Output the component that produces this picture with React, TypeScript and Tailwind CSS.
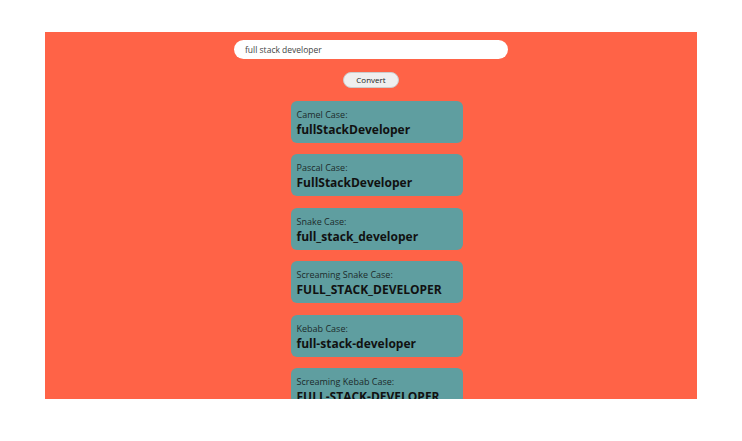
import { useState } from "react";

const cases = [
  { label: "Camel Case:", value: "fullStackDeveloper" },
  { label: "Pascal Case:", value: "FullStackDeveloper" },
  { label: "Snake Case:", value: "full_stack_developer" },
  { label: "Screaming Snake Case:", value: "FULL_STACK_DEVELOPER" },
  { label: "Kebab Case:", value: "full-stack-developer" },
  { label: "Screaming Kebab Case:", value: "FULL-STACK-DEVELOPER" },
];

export default function App() {
  const [text, setText] = useState("full stack developer");

  return (
    <div className="w-[742px] h-[441px] bg-white pt-[32px] pl-[45px] font-['Open_Sans',sans-serif]">
      <div className="w-[652px] h-[367px] bg-[#ff6347] overflow-hidden flex flex-col items-center">
        <div className="mt-[8px] w-[274px] h-[19px] shrink-0 rounded-full bg-white px-[11px] flex items-center">
          <input
            value={text}
            onChange={(e) => setText(e.target.value)}
            className="w-full bg-transparent text-[8.5px] leading-[12px] text-[#444] outline-none"
          />
        </div>
        <button className="mt-[13px] w-[56px] h-[16px] shrink-0 rounded-full bg-[#efefef] text-[8px] text-[#222] border border-[#ccc]">
          Convert
        </button>
        <div className="mt-[13px] ml-[11px] flex flex-col gap-[11.4px]">
          {cases.map((c) => (
            <div
              key={c.label}
              className="w-[172px] h-[42px] shrink-0 rounded-[6px] bg-[#5f9ea0] px-[6px] pt-[8px]"
            >
              <div className="text-[9px] leading-[12px] text-[#1c2b2b]">{c.label}</div>
              <div className="text-[12px] leading-[18px] font-bold text-[#111]">{c.value}</div>
            </div>
          ))}
        </div>
      </div>
    </div>
  );
}
